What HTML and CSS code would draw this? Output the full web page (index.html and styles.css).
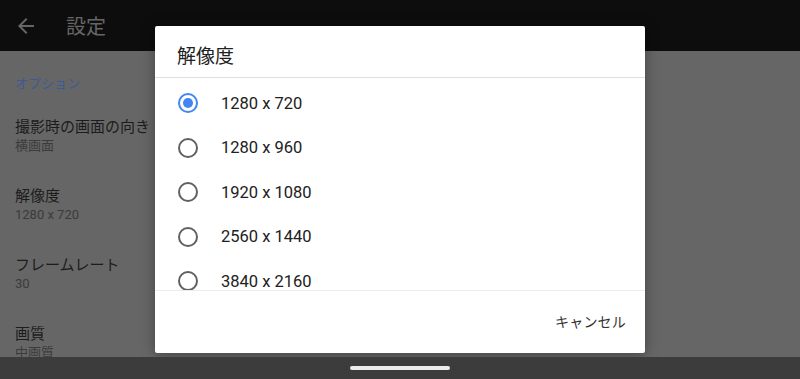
FILE: index.html
```html
<!DOCTYPE html>
<html lang="ja">
<head>
<meta charset="utf-8">
<title>設定</title>
<link rel="stylesheet" href="styles.css">
</head>
<body>
<div class="screen">
  <header class="appbar">
    <svg class="back" width="24" height="24" viewBox="0 0 24 24"><path d="M20 11H7.83l5.59-5.59L12 4l-8 8 8 8 1.41-1.41L7.83 13H20v-2z" fill="#666"/></svg>
    <span class="appbar-title">設定</span>
  </header>
  <main class="settings">
    <div class="category">オプション</div>
    <div class="pref"><div class="pref-title">撮影時の画面の向き</div><div class="pref-sub">横画面</div></div>
    <div class="pref"><div class="pref-title">解像度</div><div class="pref-sub">1280 x 720</div></div>
    <div class="pref"><div class="pref-title">フレームレート</div><div class="pref-sub">30</div></div>
    <div class="pref"><div class="pref-title">画質</div><div class="pref-sub">中画質</div></div>
  </main>
  <nav class="navbar"><span class="handle"></span></nav>

  <div class="dialog">
    <div class="dialog-title">解像度</div>
    <div class="dialog-list">
      <div class="opt"><span class="radio checked"></span><span class="opt-label">1280 x 720</span></div>
      <div class="opt"><span class="radio"></span><span class="opt-label">1280 x 960</span></div>
      <div class="opt"><span class="radio"></span><span class="opt-label">1920 x 1080</span></div>
      <div class="opt"><span class="radio"></span><span class="opt-label">2560 x 1440</span></div>
      <div class="opt"><span class="radio"></span><span class="opt-label">3840 x 2160</span></div>
    </div>
    <div class="dialog-actions"><span class="btn">キャンセル</span></div>
  </div>
</div>
</body>
</html>
```
FILE: styles.css
```css
* { box-sizing: border-box; }
html, body { margin: 0; padding: 0; }
body {
  width: 800px;
  height: 379px;
  overflow: hidden;
  font-family: Roboto, "Noto Sans CJK JP", sans-serif;
  background: #666666;
}
.screen {
  position: relative;
  width: 800px;
  height: 379px;
  display: flex;
  flex-direction: column;
  background: #666666;
}
.appbar {
  height: 51px;
  flex: none;
  background: #0d0d0d;
  display: flex;
  align-items: center;
  padding-left: 14px;
}
.back { display: block; margin-top: 1px; }
.appbar-title {
  margin-left: 28px;
  font-size: 20px;
  color: #666666;
  line-height: 24px;
  margin-top: 2px;
}
.settings {
  flex: 1;
  overflow: hidden;
  padding-left: 15px;
}
.category {
  padding-top: 24px;
  padding-bottom: 8.5px;
  font-size: 13px;
  line-height: 18px;
  color: #3b5a99;
}
.pref { padding: 15.5px 0; }
.pref-title {
  font-size: 15px;
  line-height: 20px;
  color: #1c1c1c;
}
.pref-sub {
  font-size: 13px;
  line-height: 18px;
  color: #3b3b3b;
}
.navbar {
  height: 22px;
  flex: none;
  background: #3c3c3c;
  display: flex;
  justify-content: center;
  padding-top: 9px;
  position: relative;
  z-index: 2;
}
.handle {
  width: 100px;
  height: 4px;
  border-radius: 2px;
  background: #ececec;
}
.dialog {
  position: absolute;
  left: 155px;
  top: 26px;
  width: 490px;
  height: 327px;
  background: #ffffff;
  border-radius: 2px;
  box-shadow: 0 2px 14px rgba(0,0,0,0.35);
  display: flex;
  flex-direction: column;
  z-index: 1;
}
.dialog-title {
  height: 52px;
  flex: none;
  padding: 19px 0 0 22px;
  font-size: 19px;
  line-height: 24px;
  color: #212121;
  border-bottom: 1px solid #dedede;
}
.dialog-list {
  height: 212px;
  flex: none;
  overflow: hidden;
  padding-top: 3px;
}
.opt {
  height: 44.5px;
  display: flex;
  align-items: center;
  padding-left: 23px;
}
.radio {
  width: 20px;
  height: 20px;
  border: 2px solid #616161;
  border-radius: 50%;
  flex: none;
  display: flex;
  align-items: center;
  justify-content: center;
}
.radio.checked { border-color: #4285f4; }
.radio.checked::after {
  content: "";
  width: 10px;
  height: 10px;
  border-radius: 50%;
  background: #4285f4;
}
.opt-label {
  margin-left: 23px;
  font-size: 16.5px;
  color: #212121;
}
.dialog-actions {
  flex: 1;
  border-top: 1px solid #ececec;
  display: flex;
  justify-content: flex-end;
  align-items: center;
  padding-right: 19px;
  padding-bottom: 0;
}
.btn {
  font-size: 14px;
  line-height: 20px;
  color: #333333;
  letter-spacing: 0.2px;
}
```
